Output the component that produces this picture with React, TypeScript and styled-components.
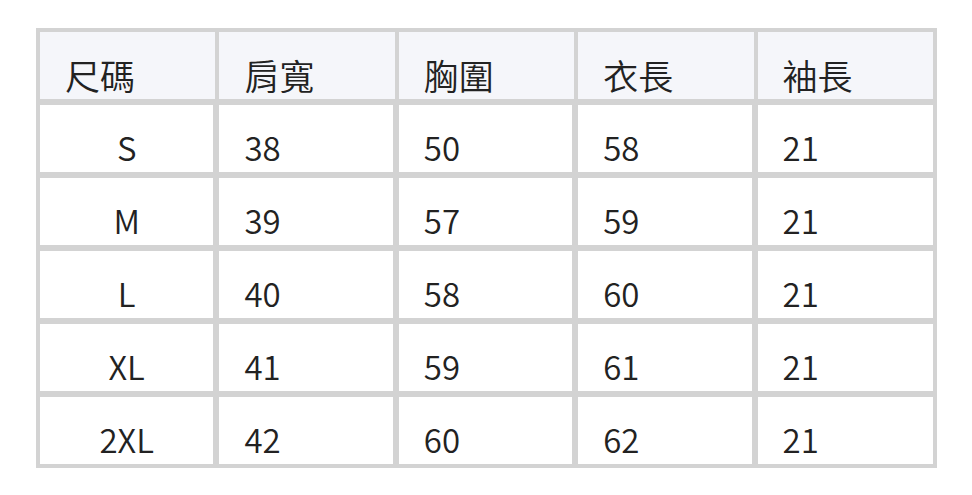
import React from "react"
import styled, { createGlobalStyle } from "styled-components"

const GlobalStyle = createGlobalStyle`
  html, body {
    margin: 0;
    padding: 0;
    background: #ffffff;
  }
  body {
    font-family: "Noto Sans CJK TC", "Noto Sans", sans-serif;
    color: #222222;
  }
`

const headers = ["尺碼", "肩寬", "胸圍", "衣長", "袖長"]

const rows = [
  ["S", "38", "50", "58", "21"],
  ["M", "39", "57", "59", "21"],
  ["L", "40", "58", "60", "21"],
  ["XL", "41", "59", "61", "21"],
  ["2XL", "42", "60", "62", "21"],
]

const App = () => {
  return (
    <Page>
      <GlobalStyle />
      <Table>
        {headers.map((h) => (
          <HeadCell key={h}>{h}</HeadCell>
        ))}
        {rows.map((row) =>
          row.map((value, i) => (
            <BodyCell key={row[0] + i} first={i === 0} last={i === row.length - 1}>
              {value}
            </BodyCell>
          ))
        )}
      </Table>
    </Page>
  )
}

export default App

const Page = styled.div`
  width: 972px;
  height: 495px;
  padding: 28px 0 0 36px;
  box-sizing: border-box;
`

const Table = styled.div`
  width: 901px;
  box-sizing: border-box;
  border: 4px solid #d3d3d3;
  background-color: #d3d3d3;
  display: grid;
  grid-template-columns: repeat(5, 1fr);
  grid-auto-rows: 67px;
  column-gap: 4px;
  row-gap: 6px;
`

const Cell = styled.div`
  display: flex;
  align-items: flex-end;
  padding: 0 25px;
  font-weight: 350;
  line-height: 1.45;
  box-sizing: border-box;
  overflow: hidden;
  white-space: nowrap;
`

const HeadCell = styled(Cell)`
  background-color: #f5f6fa;
  font-size: 35px;
  line-height: 1.4;
`

const BodyCell = styled(Cell)<{ first?: boolean; last?: boolean }>`
  background-color: #ffffff;
  font-size: 33px;
  justify-content: ${(p) => (p.first ? "center" : "flex-start")};
  margin-right: ${(p) => (p.last ? "0" : "2px")};
  padding-left: ${(p) => (p.first ? "0" : "25px")};
  padding-right: ${(p) => (p.first ? "0" : "25px")};
`
